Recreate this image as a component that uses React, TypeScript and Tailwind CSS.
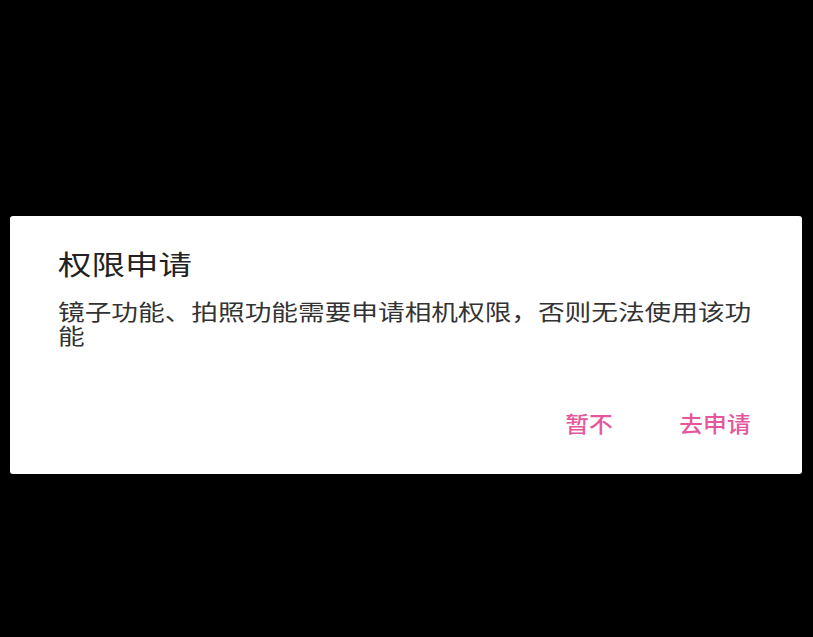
/**
 * Permission request dialog over a black screen.
 * The source screenshot is horizontally stretched, so text is widened with scale-x.
 */

const CJK = { fontFamily: '"Noto Sans CJK SC", "Noto Sans", sans-serif' };

function DialogButton({ label }: { label: string }) {
  return (
    <button className="text-[22px] leading-[30px] font-medium text-[#e4579c] scale-x-[1.08] origin-center">
      {label}
    </button>
  );
}

export default function App() {
  return (
    <div className="w-[813px] h-[637px] bg-black pt-[216px] pl-[10px] pr-[11px]" style={CJK}>
      <div className="bg-white rounded-[3px] pt-[30px] pb-[37px] pl-[48px] pr-[34px]">
        <h1 className="w-max text-[27px] leading-[36px] text-[#222222] scale-x-[1.24] origin-left">
          权限申请
        </h1>

        <p className="mt-[16px] w-[580px] text-[22px] leading-[24px] text-[#333333] scale-x-[1.212] origin-left">
          镜子功能、拍照功能需要申请相机权限，否则无法使用该功能
        </p>

        <div className="mt-[61px] flex justify-end gap-[71px] pr-[20px]">
          <DialogButton label="暂不" />
          <DialogButton label="去申请" />
        </div>
      </div>
    </div>
  );
}
